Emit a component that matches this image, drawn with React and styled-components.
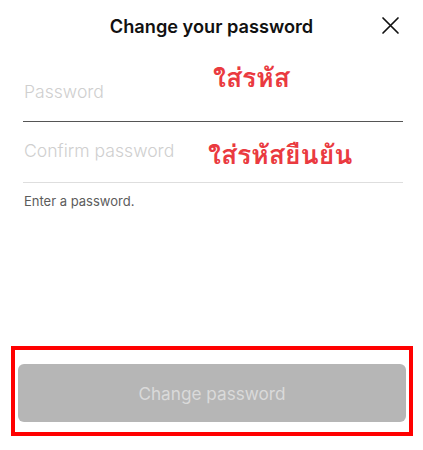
import React from 'react';
import styled, { createGlobalStyle } from 'styled-components';

const GlobalStyle = createGlobalStyle`
  * { box-sizing: border-box; }
  body {
    margin: 0;
    background: #ffffff;
    font-family: Inter, "Noto Sans", sans-serif;
  }
`;

const Page = styled.div`
  width: 423px;
  height: 450px;
  display: flex;
  flex-direction: column;
  background: #fff;
`;

const Header = styled.header`
  position: relative;
  height: 61px;
  padding-top: 14px;
  display: flex;
  justify-content: center;
  align-items: flex-start;
`;

const Title = styled.h1`
  margin: 0;
  font-size: 18.2px;
  line-height: 24px;
  font-weight: 600;
  color: #111;
`;

const CloseButton = styled.button`
  position: absolute;
  right: 23px;
  top: 16px;
  width: 19px;
  height: 19px;
  padding: 0;
  border: none;
  background: none;
  cursor: pointer;
`;

const Form = styled.div`
  padding: 0 20px 0 23px;
  display: flex;
  flex-direction: column;
`;

const Field = styled.label`
  position: relative;
  display: flex;
  align-items: center;
  height: 61px;
  border-bottom: ${p => (p.$active ? '1.5px solid #555' : '1px solid #dedede')};
`;

const Input = styled.input`
  width: 100%;
  border: none;
  outline: none;
  padding: 0 0 0 1px;
  margin-top: ${p => p.$shift || 0}px;
  font-family: Inter, "Noto Sans", sans-serif;
  font-size: 17.6px;
  font-weight: 300;
  color: #222;
  background: transparent;

  &::placeholder {
    color: #cfcfcf;
  }
`;

const Note = styled.span`
  position: absolute;
  left: ${p => p.$left}px;
  top: ${p => p.$top}px;
  font-family: Loma, "Noto Sans Thai", Garuda, "DejaVu Sans", sans-serif;
  font-size: 26.5px;
  font-weight: 700;
  line-height: 30px;
  color: #ea3a40;
  pointer-events: none;
  white-space: nowrap;
`;

const Hint = styled.p`
  margin: 10px 0 0 1px;
  font-size: 13px;
  color: #5c5c5c;
`;

const Footer = styled.div`
  margin: auto 10px 14px 11px;
  border: 4px solid #ff0000;
  padding: 14px 3px 10px 3px;
`;

const SubmitButton = styled.button`
  width: 100%;
  height: 58px;
  border: none;
  border-radius: 6px;
  background: #b6b6b6;
  color: #dadada;
  font-family: Inter, "Noto Sans", sans-serif;
  font-size: 17.2px;
  font-weight: 400;
`;

const CloseIcon = () => (
  <svg width="19" height="19" viewBox="0 0 19 19">
    <path d="M2 2 L17 17 M17 2 L2 17" stroke="#111" strokeWidth="1.7" strokeLinecap="round" />
  </svg>
);

export default function App() {
  return (
    <>
      <GlobalStyle />
      <Page>
        <Header>
          <Title>Change your password</Title>
          <CloseButton aria-label="Close">
            <CloseIcon />
          </CloseButton>
        </Header>
        <Form>
          <Field $active>
            <Input type="password" placeholder="Password" />
            <Note $left={190} $top={2}>ใส่รหัส</Note>
          </Field>
          <Field>
            <Input type="password" placeholder="Confirm password" $shift={-3} />
            <Note $left={185} $top={18}>ใส่รหัสยืนยัน</Note>
          </Field>
          <Hint>Enter a password.</Hint>
        </Form>
        <Footer>
          <SubmitButton disabled>Change password</SubmitButton>
        </Footer>
      </Page>
    </>
  );
}
